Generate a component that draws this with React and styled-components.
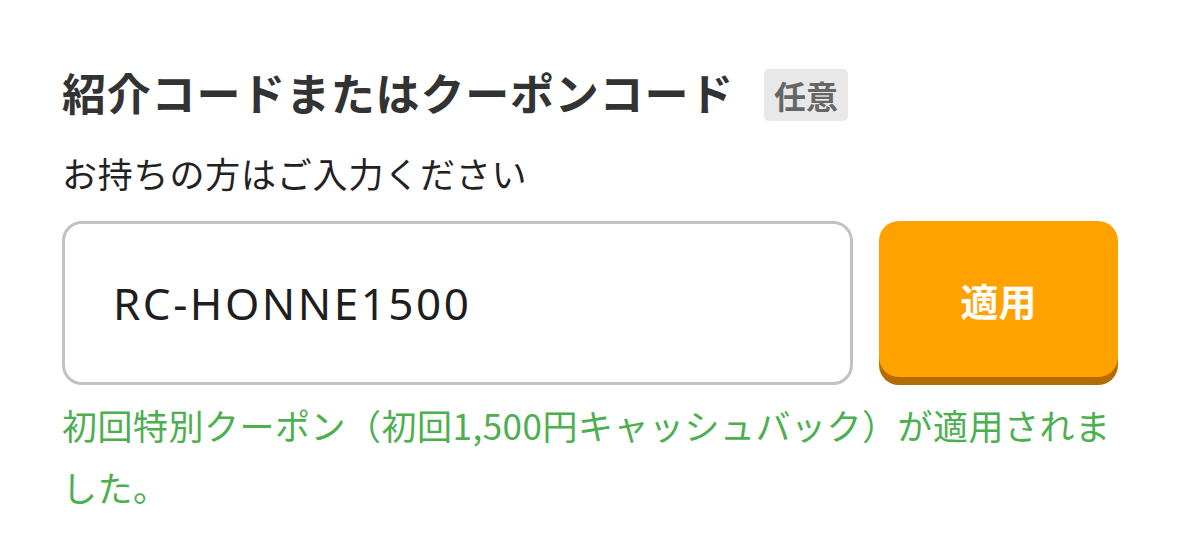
import * as React from "react";
import styled, { createGlobalStyle } from "styled-components";

const GlobalStyle = createGlobalStyle`
  body {
    margin: 0;
    background: #ffffff;
    font-family: "Noto Sans CJK JP", "Noto Sans", sans-serif;
  }
`;

const Section = styled.section`
  width: 1056px;
  padding: 62px 0 0 62px;
`;

const TitleRow = styled.div`
  display: flex;
  align-items: center;
  column-gap: 30px;
`;

const Title = styled.h2`
  margin: 0;
  font-size: 44px;
  line-height: 60px;
  font-weight: 700;
  letter-spacing: 0.8px;
  color: #333333;
`;

const Badge = styled.span`
  display: inline-block;
  margin-top: 6px;
  padding: 0 10px;
  height: 52px;
  line-height: 52px;
  border-radius: 5px;
  background: #e8e8e8;
  color: #666666;
  font-size: 32px;
  font-weight: 700;
`;

const Lead = styled.p`
  margin: 29px 0 0 0;
  font-size: 35px;
  line-height: 44px;
  letter-spacing: 0.8px;
  color: #222222;
`;

const Form = styled.div`
  display: flex;
  align-items: flex-start;
  column-gap: 26px;
  margin-top: 26px;
`;

const CodeInput = styled.input`
  flex: 1;
  box-sizing: border-box;
  height: 164px;
  padding: 0 48px;
  border: 3px solid #c2c2c2;
  border-radius: 20px;
  font-family: "Noto Sans", "Noto Sans CJK JP", sans-serif;
  font-size: 44px;
  letter-spacing: 2.5px;
  color: #1e1e1e;
  outline: none;
`;

const ApplyButton = styled.button`
  width: 239px;
  height: 156px;
  border: none;
  border-radius: 20px;
  background: #ffa200;
  box-shadow: 0 8px 0 #b36c00;
  color: #ffffff;
  font-family: "Noto Sans CJK JP", sans-serif;
  font-size: 38px;
  font-weight: 700;
  cursor: pointer;
`;

const Notice = styled.p`
  margin: 9px 0 0 0;
  font-size: 35px;
  line-height: 62px;
  letter-spacing: 0.5px;
  color: #4caf50;
`;

const App = () => {
  return (
    <>
      <GlobalStyle />
      <Section>
        <TitleRow>
          <Title>紹介コードまたはクーポンコード</Title>
          <Badge>任意</Badge>
        </TitleRow>
        <Lead>お持ちの方はご入力ください</Lead>
        <Form>
          <CodeInput defaultValue="RC-HONNE1500" />
          <ApplyButton>適用</ApplyButton>
        </Form>
        <Notice>
          初回特別クーポン（初回1,500円キャッシュバック）が適用されました。
        </Notice>
      </Section>
    </>
  );
};

export default App;
